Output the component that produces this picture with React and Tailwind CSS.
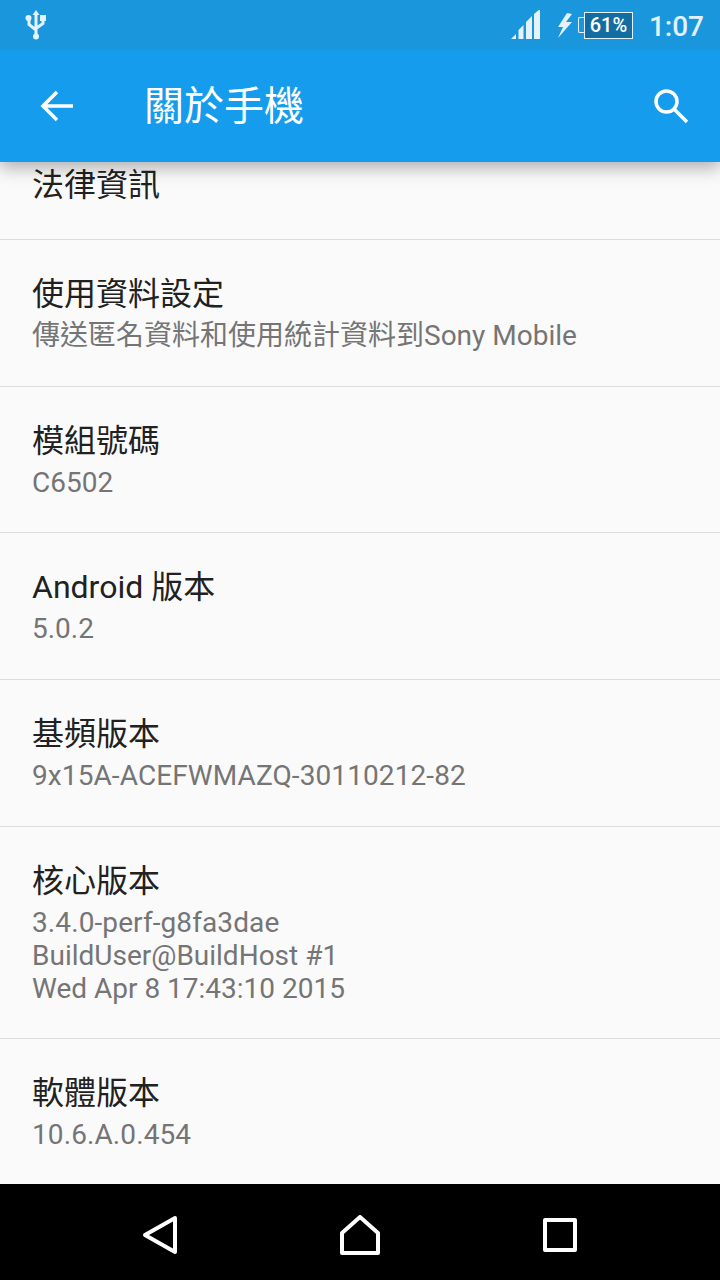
import React from 'react';

const FONT = "font-['Roboto','Noto_Sans_CJK_TC',sans-serif]";

const rows = [
  { title: '使用資料設定', lines: ['傳送匿名資料和使用統計資料到Sony Mobile'] },
  { title: '模組號碼', lines: ['C6502'] },
  { title: 'Android 版本', lines: ['5.0.2'] },
  { title: '基頻版本', lines: ['9x15A-ACEFWMAZQ-30110212-82'] },
  { title: '核心版本', lines: ['3.4.0-perf-g8fa3dae', 'BuildUser@BuildHost #1', 'Wed Apr 8 17:43:10 2015'] },
  { title: '軟體版本', lines: ['10.6.A.0.454'] },
];

const wideLines = ['9x15A-ACEFWMAZQ-30110212-82', '3.4.0-perf-g8fa3dae', '10.6.A.0.454'];

function Row({ title, lines }) {
  return (
    <div className="border-t border-[#dcdcdc] px-8 pt-[33px] pb-[33.67px]">
      <div className="text-[32px] leading-[42px] text-[#212121]">{title}</div>
      <div className="mt-[4px] text-[28px] leading-[33px] text-[#757575]">
        {lines.map((l) => (
          <div key={l} className={wideLines.includes(l) ? 'tracking-[0.1px]' : ''}>{l}</div>
        ))}
      </div>
    </div>
  );
}

export default function App() {
  return (
    <div className={`${FONT} w-[720px] h-[1280px] flex flex-col bg-[#fafafa] overflow-hidden`}>
      <div className="relative z-10 shadow-[0_6px_16px_rgba(0,0,0,0.3)]">
        {/* status bar */}
        <div className="h-[50px] bg-[#1a96dc] flex items-center pl-[25px] pr-[16px] text-[#e3f2fb]">
          <svg width="22" height="30" viewBox="0 0 22 30" fill="none" stroke="#e3f2fb" strokeWidth="3">
            <path d="M11 4v22M4 9v5.500l7 5.500M18 9v4.500l-7 5" />
            <path d="M11 0l3.500 5h-7z" fill="#e3f2fb" stroke="none" />
            <circle cx="11" cy="26.500" r="3" fill="#e3f2fb" stroke="none" />
            <circle cx="3.500" cy="8" r="3" fill="#e3f2fb" stroke="none" />
            <path d="M15 5h6v6h-6z" fill="#e3f2fb" stroke="none" />
          </svg>
          <div className="ml-auto flex items-center">
            <svg width="30" height="30" viewBox="0 0 30 30" fill="#e3f2fb" className="mr-[16px]">
              <path d="M0 29l5-5v5zM7.500 29v-9l5-5v14zM15 29v-17l6-6v23zM23 29v-25l6-5v30z" />
            </svg>
            <svg width="16" height="25" viewBox="0 0 16 25" fill="#e3f2fb">
              <path d="M10 0L1 14h5L1 25 15 9H9l6-8z" />
            </svg>
            <div className="ml-[5px] flex items-center">
              <div className="w-[6px] h-[16px] bg-[#1a96dc] border border-[#e3f2fb] border-r-0 rounded-l-[2px]" />
              <div className="w-[49px] h-[27px] bg-[#136da3] border border-[#e3f2fb] flex items-center justify-center text-[20px] font-medium text-white leading-none">61%</div>
            </div>
            <div className="ml-[16px] mt-[3px] text-[28px] font-medium leading-none text-[#e3f2fb]">1:07</div>
          </div>
        </div>
        {/* app bar */}
        <div className="h-[112px] bg-[#159cec] flex items-center text-white">
          <svg width="33" height="32" viewBox="0 0 33 32" fill="none" stroke="white" strokeWidth="3.500" className="ml-[40px]">
            <path d="M33 16H3M17 2L3 16l14 14" />
          </svg>
          <div className="ml-[71px] mt-[1px] text-[40px] leading-none">關於手機</div>
          <svg width="36" height="36" viewBox="0 0 36 36" fill="none" stroke="white" strokeWidth="3.500" className="ml-auto mr-[31px]">
            <circle cx="13.500" cy="13.500" r="10.500" />
            <path d="M21 21l13 13" />
          </svg>
        </div>
      </div>
      {/* list */}
      <div className="flex-1 overflow-hidden">
        <div className="h-[77px] px-8 overflow-hidden flex items-end">
          <div className="text-[32px] leading-[42px] text-[#212121] mb-[33px]">法律資訊</div>
        </div>
        {rows.map((r) => <Row key={r.title} title={r.title} lines={r.lines} />)}
      </div>
      {/* nav */}
      <div className="h-[96px] bg-black flex items-center justify-center pt-[6px]">
        <div className="w-[200px] flex justify-center">
          <svg width="36" height="40" viewBox="0 0 36 40" fill="none" stroke="white" strokeWidth="4" strokeLinejoin="round">
            <path d="M33 3v34L3 20z" />
          </svg>
        </div>
        <div className="w-[200px] flex justify-center">
          <svg width="40" height="40" viewBox="0 0 40 40" fill="none" stroke="white" strokeWidth="4" strokeLinejoin="round">
            <path d="M2 18L20 2l18 16v20H2z" />
          </svg>
        </div>
        <div className="w-[200px] flex justify-center">
          <svg width="34" height="34" viewBox="0 0 34 34" fill="none" stroke="white" strokeWidth="4" strokeLinejoin="round">
            <path d="M2 2h30v30H2z" />
          </svg>
        </div>
      </div>
    </div>
  );
}
